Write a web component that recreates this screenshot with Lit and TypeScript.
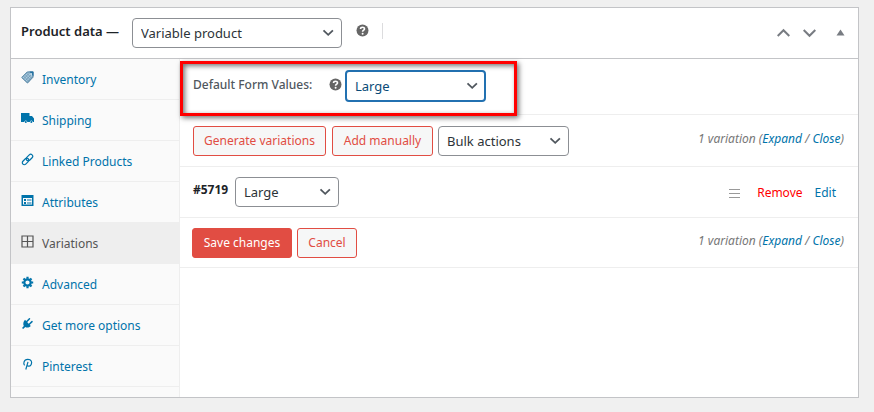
import { LitElement, html, css, svg } from "lit";
import { customElement, property } from "lit/decorators.js";

const icons: Record<string, unknown> = {
  tag: svg`<path fill="#a9cbe0" d="M.5 6.500 6 .8h6v5.400L6.500 12.300z"/><path fill="none" stroke="#46799a" stroke-width="1" d="M.8 6.500 6.300 1h5.700v5.200L6.500 12z"/><path fill="none" stroke="#5c87a3" stroke-width=".6" d="M2.500 5l5.500 5.500M4 3.500l5.500 5.500M5.500 2l5 5M2.500 8 8.500 2M4 9.800l7-7M5.500 11.200l6-6"/><path fill="#2271a1" d="M8.500.5h4v4.500l-1.500-1z"/><circle cx="10.400" cy="3" r=".8" fill="#fff"/>`,
  truck: svg`<path d="M0 1h8.500v3H11l2 2.500V10h-1.200a1.500 1.500 0 0 0-3 0H6.300a1.500 1.500 0 0 0-3 0H0z"/><circle cx="4.800" cy="10" r="1"/><circle cx="10.300" cy="10" r="1"/>`,
  link: svg`<g fill="none" stroke="currentColor" stroke-width="1.200" transform="rotate(-45 6.500 6.500)"><rect x="0" y="4.500" width="7.500" height="4" rx="2"/><rect x="5.500" y="4.500" width="7.500" height="4" rx="2"/></g>`,
  list: svg`<path fill-rule="evenodd" d="M.5 1h12v11H.5zM2 4v6.500h9V4z"/><path d="M3 5h2v2H3zM3 8h2v2H3zM6 5.500h4.500v1H6zM6 8.500h4.500v1H6z"/>`,
  grid: svg`<path fill="none" stroke="currentColor" stroke-width="1.200" d="M1 1h11v11H1zM6.500 1v11M1 6.500h11"/>`,
  gear: svg`<circle cx="6.500" cy="6.500" r="3.200" fill="none" stroke="currentColor" stroke-width="2.200"/><path stroke="currentColor" stroke-width="2.200" d="M6.500.8v2M6.500 10.200v2M.8 6.500h2M10.200 6.500h2M2.500 2.500l1.300 1.300M9.200 9.200l1.300 1.300M2.500 10.500l1.300-1.300M9.200 3.800l1.300-1.300"/>`,
  plug: svg`<path d="M4 2.800 9.800 9c-1.800 1.700-4 2-5.500 1L2.200 12 1 11l1.800-2C1.800 7 2.300 4.500 4 2.800z"/><path fill="none" stroke="currentColor" stroke-width="1.500" stroke-linecap="round" d="M5.800 4.600 8.500 1.800M8.300 7.300 11 4.600"/>`,
  pin: svg`<path fill="none" stroke="currentColor" stroke-width="1.200" d="M3.600 7.400C2.200 6 2.500 1.500 6.700 1.300c3.800-.1 4.500 3 3.500 5.100-.9 2-3.300 2.300-4.100.8M7 3.800 4.800 11.500"/>`,
  help: svg`<circle cx="6.500" cy="6.500" r="6"/><path fill="none" stroke="#fff" stroke-width="1.600" d="M4.500 5c.1-2.300 4-2.200 4-.1 0 1.300-1.900 1.300-1.900 2.900"/><circle cx="6.600" cy="9.800" r="1" fill="#fff"/>`,
  up: svg`<path fill="none" stroke="currentColor" stroke-width="2" d="M.7 9 6.500 3.200 12.300 9"/>`,
  down: svg`<path fill="none" stroke="currentColor" stroke-width="2" d="M.7 3l5.800 5.800 5.800-5.800"/>`,
  chevron: svg`<path fill="none" stroke="currentColor" stroke-width="1.800" d="M1.500 4.300l4.700 4.500 4.700-4.500"/>`,
  triangle: svg`<path d="M2.500 8.500h8l-4-6z"/>`,
  handle: svg`<path fill="none" stroke="currentColor" stroke-width="1" d="M1 2.500h11M1 6.500h11M1 10.500h11"/>`,
};

const icon = (name: string) =>
  html`<svg class="icon" viewBox="0 0 13 13" width="13" height="13" fill="currentColor" aria-hidden="true">${icons[name]}</svg>`;

const iconStyles = css`
  .icon { display: block; flex: none; }
`;

@customElement("select-box")
class SelectBox extends LitElement {
  @property() label = "";
  @property({ type: Array }) options: string[] = [];

  static styles = [iconStyles, css`
    :host { display: inline-grid; flex: none; height: 30px; font-size: 13px; color: #2c3338; --line: 1px solid #8c8f94; }
    :host([active]) { height: 32px; color: #0a4b78; --line: 2px solid #2271b1; }
    .box { display: grid; position: relative; }
    .control {
      appearance: none; width: 100%; margin: 0; padding: 0 24px 0 8px; box-sizing: border-box;
      border: var(--line); border-radius: 4px; background: #fff;
      color: inherit; font: inherit; outline: none;
    }
    .icon { position: absolute; right: 7px; top: 50%; margin-top: -7px; color: #50575e; pointer-events: none; }
  `];

  render() {
    return html`<div class="box">
      <select class="control" aria-label=${this.label}>
        ${this.options.map((o) => html`<option>${o}</option>`)}
      </select>
      ${icon("chevron")}
    </div>`;
  }
}

const tabs = [
  ["tag", "Inventory"],
  ["truck", "Shipping"],
  ["link", "Linked Products"],
  ["list", "Attributes"],
  ["grid", "Variations"],
  ["gear", "Advanced"],
  ["plug", "Get more options"],
  ["pin", "Pinterest"],
];

@customElement("app-root")
class AppRoot extends LitElement {
  static styles = [iconStyles, css`
    :host {
      display: block; box-sizing: border-box; min-height: 100vh; padding: 7px 15px 14px 10px;
      background: #f0f0f0; color: #50575e;
      font: 12px/20px "Noto Sans", "Open Sans", sans-serif;
    }
    a { color: #0073aa; text-decoration: none; }
    button { font: inherit; cursor: pointer; }
    .panel { border: 1px solid #c3c4c7; background: #fff; }
    .header { display: flex; align-items: center; height: 50px; padding: 0 11px 0 10px; border-bottom: 1px solid #c3c4c7; }
    .title { margin: 0; width: 111px; padding-bottom: 4px; box-sizing: border-box; font-size: 13px; line-height: 20px; font-weight: 600; color: #1d2327; white-space: nowrap; }
    .type { width: 210px; }
    .help { border: 0; padding: 0; background: none; color: #666; margin-bottom: 4px; }
    .header .help { margin-left: 14px; margin-bottom: 6px; }
    .divider { width: 1px; height: 16px; margin: 0 0 4px 13px; background: #dcdcde; }
    .actions { display: flex; gap: 13px; margin-left: auto; }
    .action { border: 0; padding: 0; background: none; color: #787c82; }
    .action:last-child { margin-left: 5px; }
    .body { display: flex; }
    .tabs { width: 168px; flex: none; box-sizing: content-box; margin: 0; padding: 0 0 10px; list-style: none; background: #fafafa; border-right: 1px solid #eee; }
    .tab { display: flex; align-items: center; gap: 8px; height: 40px; padding: 0 10px; border-bottom: 1px solid #eee; }
    .tab .icon { margin-bottom: 4px; }
    .name { padding-top: 2px; }
    .tab.current { background: #eee; color: #555; }
    .content { flex: 1; min-width: 0; position: relative; }
    .row { display: flex; align-items: center; height: 50px; padding: 0 14px 0 13px; border-bottom: 1px solid #eee; }
    .row.defaults { height: 55px; }
    .row.bar { height: 50px; padding-top: 1px; }
    .row.save { height: 48px; padding-top: 1px; padding-left: 12px; }
    .label { width: 136px; padding-bottom: 4px; font-weight: 500; }
    .size { width: 141px; margin: 0 0 2px 3px; }
    .mark { position: absolute; top: 2px; left: 0; width: 337px; height: 55px; box-sizing: border-box; border: 3px solid #f00; box-shadow: 2px 2px 5px #0008, inset 2px 2px 5px #0008; pointer-events: none; }
    .button { height: 30px; margin-right: 6px; padding: 0 10px; border: 1px solid #e14d43; border-radius: 3px; background: #f6f7f7; color: #e14d43; white-space: nowrap; }
    .generate { width: 133px; }
    .add { width: 101px; margin-right: 5px; }
    .bulk { width: 131px; }
    .primary { width: 100px; margin-right: 5px; background: #e14d43; color: #fff; }
    .cancel { width: 60px; }
    .count { margin-left: auto; padding-bottom: 4px; font-style: italic; color: #777; white-space: nowrap; }
    .number { width: 42px; padding-bottom: 4px; color: #1d2327; }
    .value { width: 104px; }
    .tools { display: flex; align-items: center; gap: 12px; margin-left: auto; padding: 2px 8px 0 0; }
    .tools .icon { color: #999; margin-right: 4px; }
    .remove { color: #f00; }
  `];

  count() {
    return html`<span class="count">1 variation (<a href="#">Expand</a> / <a href="#">Close</a>)</span>`;
  }

  render() {
    return html`
      <section class="panel">
        <header class="header">
          <h2 class="title">Product data —</h2>
          <select-box class="type" label="Product type" .options=${["Variable product"]}></select-box>
          <button class="help" aria-label="Help">${icon("help")}</button>
          <span class="divider"></span>
          <div class="actions">
            <button class="action" aria-label="Move up">${icon("up")}</button>
            <button class="action" aria-label="Move down">${icon("down")}</button>
            <button class="action" aria-label="Toggle panel">${icon("triangle")}</button>
          </div>
        </header>
        <div class="body">
          <ul class="tabs">
            ${tabs.map(([name, text]) => html`<li><a href="#" class="tab ${text === "Variations" ? "current" : ""}">${icon(name)}<span class="name">${text}</span></a></li>`)}
          </ul>
          <main class="content">
            <div class="row defaults">
              <span class="label">Default Form Values:</span>
              <button class="help" aria-label="Help">${icon("help")}</button>
              <select-box class="size" active label="Default Form Values" .options=${["Large"]}></select-box>
            </div>
            <div class="row bar">
              <button class="button generate">Generate variations</button>
              <button class="button add">Add manually</button>
              <select-box class="bulk" label="Bulk actions" .options=${["Bulk actions"]}></select-box>
              ${this.count()}
            </div>
            <div class="row">
              <strong class="number">#5719</strong>
              <select-box class="value" label="Size" .options=${["Large"]}></select-box>
              <div class="tools">${icon("handle")}<a href="#" class="remove">Remove</a><a href="#">Edit</a></div>
            </div>
            <div class="row save">
              <button class="button primary">Save changes</button>
              <button class="button cancel">Cancel</button>
              ${this.count()}
            </div>
            <div class="mark"></div>
          </main>
        </div>
      </section>
    `;
  }
}
